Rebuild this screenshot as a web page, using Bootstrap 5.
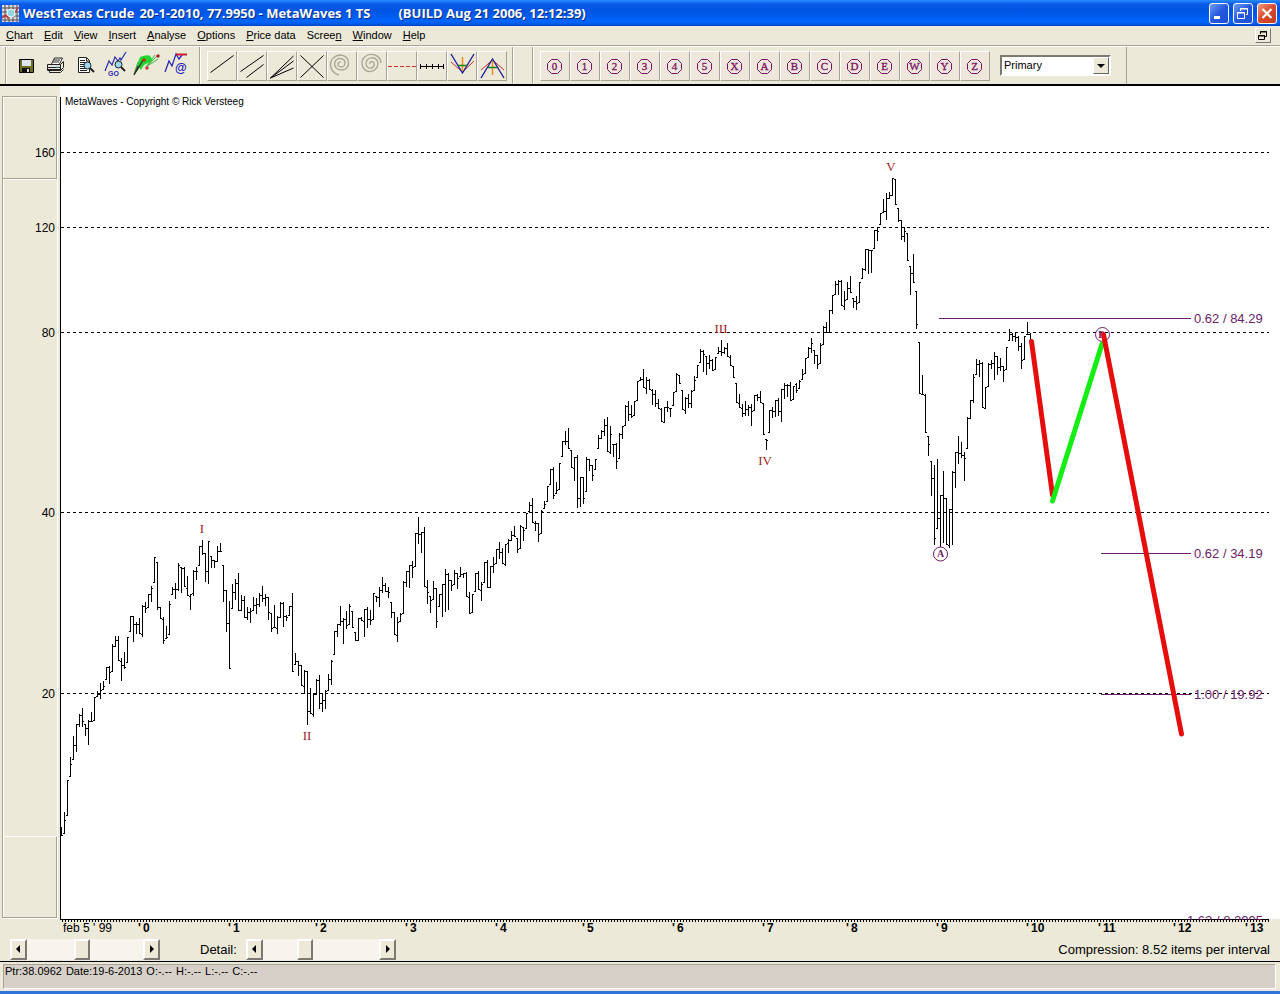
<!DOCTYPE html>
<html lang="en">
<head>
<meta charset="utf-8">
<meta name="viewport" content="width=device-width, initial-scale=1">
<title>WestTexas Crude - MetaWaves 1 TS</title>
<link href="https://cdn.jsdelivr.net/npm/bootstrap@5.3.0/dist/css/bootstrap.min.css" rel="stylesheet">
<style>
:root { --face: #ece9d8; --shade: #a7a493; --plum: #6b1d6b; }
body { background: var(--face); color: #000; font-family: "Liberation Sans", Arial, sans-serif; font-size: 11px; line-height: 15px; }
button { color: #000; }
.titlebar { height: 26px; padding: 0 3px 0 2px; background: linear-gradient(#2b8bff 0, #0a5be8 4px, #0054e3 11px, #0066ff 22px, #0045c8 26px); }
.title-text { font: 700 13px/26px "Open Sans", "Noto Sans", sans-serif; color: #fff; text-shadow: 1px 1px 0 #0a2a80; }
.instrument { margin-right: 5px; }
.build { margin-left: 28px; }
.win-btn { width: 20px; height: 21px; padding: 0; border: 1px solid #fff; border-radius: 3px; background: linear-gradient(135deg, #6f9cf5, #2558dd 50%, #1c4fd8); }
.win-btn.close-btn { background: linear-gradient(135deg, #ee9a80, #d9492a 50%, #c23c1c); }
.menubar { height: 20px; padding: 0 9px 0 6px; border-bottom: 1px solid var(--shade); }
.menu-items { gap: 11px; }
.menubar a { color: #000; text-decoration: none; line-height: 18px; padding-bottom: 1px; }
.mdi-btn { width: 16px; height: 15px; padding: 0; border: 1px solid; border-color: #fff #777 #777 #fff; background: var(--face); }
.toolbar { height: 40px; border-top: 1px solid #fff; border-bottom: 2px solid #000; }
.band { height: 37px; border-left: 1px solid var(--shade); box-shadow: inset 1px 0 0 #fff; }
.band-files { width: 193px; margin-left: 5px; padding: 0 5px; }
.band-tools { width: 313px; margin-left: 1px; padding: 0 5px 0 7px; }
.band-gap { width: 20px; }
.band-waves { width: 594px; padding: 0 7px; }
.flat { width: 30px; height: 30px; padding: 0; border: 0; background: none; }
.tool { width: 30px; height: 30px; padding: 0; border: 1px solid; border-color: #fff var(--shade) var(--shade) #fff; background: var(--face); }
.wave { background: #efe6dc; }
.degree { width: 111px; margin-left: 10px; }
.degree select { width: 100%; height: 21px; padding: 0 20px 0 2px; border: 2px solid; border-color: #7c7a70 #fff #fff #7c7a70; border-radius: 0; background: #fff; color: #000; font-size: 11px; line-height: 15px; appearance: none; }
.drop { position: absolute; right: 2px; top: 2px; width: 16px; height: 17px; border: 1px solid; border-color: #fff #666 #666 #fff; background: var(--face); pointer-events: none; }
.arrow { width: 17px; height: 21px; padding: 0; border: 2px solid; border-color: #fff #7c7a70 #7c7a70 #fff; background: var(--face); }
.slide { width: 116px; height: 21px; margin: 0; appearance: none; background: #f6f4ec; }
.slide::-webkit-slider-thumb { appearance: none; width: 16px; height: 21px; border: 2px solid; border-color: #fff #7c7a70 #7c7a70 #fff; background: var(--face); }
.controls { height: 25px; padding: 0 10px; border-bottom: 1px solid #000; font-size: 13px; }
.detail { width: 46px; margin-left: 40px; }
.status { height: 25px; margin: 2px 4px 2px 3px; padding: 0 1px; gap: 4px; line-height: 13px; border: 1px solid; border-color: var(--shade) #fff #fff var(--shade); background: #d6d0c8; }
.taskedge { height: 4px; background: #2f74dc; }
.chart text { font-family: "Liberation Sans", Arial, sans-serif; font-size: 12px; }
.chart .note { font-size: 10px; }
.chart .year { font-weight: 700; }
.chart .roman { font-family: "Liberation Serif", serif; font-size: 13px; fill: #a01c24; text-anchor: middle; }
.chart .letter { font-family: "Liberation Serif", serif; font-size: 10px; font-weight: 700; fill: var(--plum); text-anchor: middle; }
.chart .level { font-size: 13px; fill: var(--plum); }
.wave text { font: 400 11px "Liberation Serif", serif; fill: #7c1464; stroke: #7c1464; stroke-width: .3px; text-anchor: middle; }
</style>
</head>
<body class="min-vh-100 d-flex flex-column">
<header class="titlebar d-flex align-items-center">
  <svg width="17" height="17" viewBox="0 0 17 17" class="me-1" aria-hidden="true"><rect width="17" height="17" fill="#d8dcdc"/><path d="M3 0v17M7 0v17M11 0v17M15 0v17M0 3h17M0 7h17M0 11h17M0 15h17" stroke="#5b4a50"/><path d="M0 13l4-3 2 3 4-8 3 3 3-6" stroke="#c23038" fill="none" stroke-width="1.5"/><circle cx="9" cy="8" r="4" fill="#8fd8e0" stroke="#e8ffff"/></svg>
  <h1 class="title-text d-flex m-0 flex-grow-1"><span class="instrument">WestTexas Crude</span> <span>20-1-2010, 77.9950 - MetaWaves 1 TS</span> <span class="build">(BUILD Aug 21 2006, 12:12:39)</span></h1>
  <div class="d-flex gap-1">
    <button class="win-btn d-flex" aria-label="Minimize"><svg width="18" height="19"><path d="M4 13.500h6" stroke="#fff" stroke-width="3"/></svg></button>
    <button class="win-btn d-flex" aria-label="Restore"><svg width="18" height="19" fill="none" stroke="#fff"><path d="M6.500 7V4.500h7v6H12M6 5h8M3.500 8.500h7v6h-7zM3 9h8"/></svg></button>
    <button class="win-btn close-btn d-flex" aria-label="Close"><svg width="18" height="19"><path d="M4.500 5l9 9M13.500 5l-9 9" stroke="#fff" stroke-width="2.200"/></svg></button>
  </div>
</header>
<nav class="menubar d-flex align-items-center" aria-label="Main menu">
  <div class="menu-items d-flex flex-grow-1" id="menu"></div>
  <button class="mdi-btn d-flex" aria-label="Restore chart window"><svg width="14" height="13" fill="none" stroke="#000"><path d="M4.500 5V2.500h6v5H9M4 3h7M2.500 6.500h6v4h-6zM2 7h7"/></svg></button>
</nav>
<div class="toolbar d-flex" role="toolbar">
  <div class="band band-files d-flex align-items-center">
    <button class="flat" aria-label="Save"><svg width="30" height="30"><path d="M8.500 8.500h14v13h-14z" fill="#6e6e20" stroke="#000"/><path d="M11 9h9v6h-9z" fill="#dfe6f0"/><path d="M11 17h8v5h-8z" fill="#111"/><path d="M16 18h2v3h-2z" fill="#ddd"/></svg></button>
    <button class="flat" aria-label="Print"><svg width="30" height="30" fill="none" stroke="#222"><path d="M10.500 13l3-6h8l-3 6" fill="#fff"/><path d="M13 9h6M12 11h6" /><path d="M6.500 13.500h13v6h-13z" fill="#e7e7df"/><path d="M19.500 13.500l3-3v6l-3 3"/><path d="M8.500 19.500v2h11l3-3M7 16.500h12M7 18.500h12"/><path d="M15 16h3" stroke="#4bb8c8"/></svg></button>
    <button class="flat" aria-label="Print preview"><svg width="30" height="30" fill="none" stroke="#222"><path d="M7.500 6.500h8l3 3v12h-11z" fill="#fff"/><path d="M15.500 7v3h3M9 9.500h5M9 11.500h7M9 13.500h4M9 15.500h4M9 17.500h5M9 19.500h7"/><circle cx="16.500" cy="14.500" r="3.500" fill="#9cd8ee"/><path d="M19 17l4 4" stroke-width="2"/></svg></button>
    <button class="flat" aria-label="Go to wave"><svg width="30" height="30" fill="none"><path d="M4 20l4-10 3 4 3-8 3 4 2-3 1 2 5-8" stroke="#2b2bb4" stroke-width="1.200"/><circle cx="17.500" cy="13.500" r="3.500" fill="#9cd8ee" stroke="#223"/><path d="M20 16l4 4" stroke="#222" stroke-width="2"/><text x="7" y="25" font-size="7" font-weight="700" fill="#2b2bb4">GO</text></svg></button>
    <button class="flat" aria-label="Fan"><svg width="30" height="30" fill="none"><path d="M10 6q12-5 12 4l-8 4-3 5-4-5z" transform="translate(-1 0)" fill="#20d830"/><path d="M3 23l4-12M3 23L15 9M15 16l11-11M15 16l9-12M15 16l12-8" stroke="#40b840"/><path d="M3 24L12 9M3 24l4-9" stroke="#333" stroke-width="1.300"/><circle cx="13" cy="9" r="1.700" fill="#c03010"/><circle cx="16" cy="17" r="1.700" fill="#c33"/><circle cx="27" cy="5" r="1.700" fill="#a22"/></svg></button>
    <button class="flat" aria-label="Mail wave"><svg width="30" height="30" fill="none"><path d="M4 21l4-11 3 5 4-12 3 5 3-4" stroke="#2b2bb4" stroke-width="1.300"/><path d="M15 3.500h11" stroke="#d01830" stroke-width="2"/><text x="14" y="21" font-size="12" font-weight="700" fill="#2222c0">@</text></svg></button>
  </div>
  <div class="band band-tools d-flex align-items-center">
    <button class="tool" aria-label="Trend line"><svg width="28" height="28"><path d="M2.500 20.500l23-17" stroke="#000"/></svg></button>
    <button class="tool" aria-label="Channel"><svg width="28" height="28"><path d="M2.500 19.500l23-16M8.500 25.500l17-13" stroke="#000"/></svg></button>
    <button class="tool" aria-label="Speed lines"><svg width="28" height="28"><path d="M2.500 26l23-22M2.500 26l23-17M2.500 26l23-10" stroke="#000"/></svg></button>
    <button class="tool" aria-label="Cross lines"><svg width="28" height="28"><path d="M2.500 3.500l23 22M25.500 3.500l-23 22" stroke="#000"/></svg></button>
    <button class="tool" aria-label="Spiral left"><svg width="28" height="28" fill="none" stroke="#aaa798" stroke-width="1.400"><path d="M11 23C-1 20 0 4 12 3C23 3 23 18 14 18C4 18 5 6 12 6.500C19 7 18 15 13 15C8 14 10 9 13 10"/></svg></button>
    <button class="tool" aria-label="Spiral right"><svg width="28" height="28" fill="none" stroke="#aaa798" stroke-width="1.400"><path d="M23 11C22 -1 4 0 4 11C4 23 20 22 20 11C19 3 7 5 8 12C9 19 18 16 16 11C14 8 11 10 12 12"/></svg></button>
    <button class="tool" aria-label="Support line"><svg width="28" height="28"><path d="M0 14.500h28" stroke="#d03030" stroke-dasharray="4 2"/></svg></button>
    <button class="tool" aria-label="Time ruler"><svg width="28" height="28"><path d="M2 14.500h24M2.500 12v5M8.500 12v5M14.500 12v5M20.500 12v5M25.500 12v5" stroke="#000"/></svg></button>
    <button class="tool" aria-label="Bottom projection"><svg width="28" height="28" fill="none"><path d="M3 10l11.500 10L26 9" stroke="#c03030"/><path d="M3 2l11.500 19L26 2" stroke="#20209a" stroke-width="1.400"/><path d="M14.500 5v14" stroke="#f09010" stroke-width="1.500"/><path d="M10 13.500h9" stroke="#108010" stroke-width="1.500"/></svg></button>
    <button class="tool" aria-label="Top projection"><svg width="28" height="28" fill="none"><path d="M3 18L14.500 8 26 18" stroke="#c03030"/><path d="M3 26L14.500 7 26 26" stroke="#20209a" stroke-width="1.400"/><path d="M14.500 9v14" stroke="#f09010" stroke-width="1.500"/><path d="M10 15.500h9" stroke="#108010" stroke-width="1.500"/></svg></button>
  </div>
  <div class="band band-gap"></div>
  <div class="band band-waves d-flex align-items-center">
    <div class="d-flex" id="waves"></div>
    <div class="degree position-relative">
      <select class="d-block" aria-label="Wave degree"><option>Primary</option></select>
      <span class="drop d-flex" aria-hidden="true"><svg width="14" height="15"><path d="M3 6h8l-4 4z"/></svg></span>
    </div>
  </div>
  <div class="band"></div>
</div>
<main class="bg-white">
  <svg class="chart d-block w-100" viewBox="0 86 1280 851" role="img" aria-label="WestTexas Crude price chart">
    <defs><clipPath id="plot"><rect x="60" y="86" width="1220" height="834"/></clipPath></defs>
    <rect x="60" y="86" width="1220" height="833" fill="#fff"/>
    <path d="M0 86h60v833h1220v18H0z" fill="#ece9d8"/>
    <g fill="none" shape-rendering="crispEdges">
      <path d="M3.500 918V97.500H56M3 179.500h53M3 836.500h53M57.500 97v821.500H3" stroke="#fff"/>
      <path d="M2.500 918V96.500H57M56.500 97v82M3 178.500h54M56.500 837v80M3 917.500h54" stroke="#a7a493"/>
      <path d="M60.500 97v823M60 919.500h1209" stroke="#000"/>
      <path d="M62 921h1207" stroke="#000" stroke-width="2" stroke-dasharray="1 2"/>
      <path id="grid" stroke="#000" stroke-dasharray="3 3"/>
      <path id="bars" stroke="#000"/>
      <path d="M939 318.500h252M1101 553.500h90M1101 694.500h90" stroke="#6b1d6b"/>
    </g>
    <g id="labels"></g>
    <g fill="none" stroke="#6b1d6b"><circle cx="940.500" cy="554" r="7"/><circle cx="1102.500" cy="334.500" r="7"/></g>
    <text class="letter" x="940.500" y="557">A</text><text class="letter" x="1101.500" y="338">B</text>
    <g fill="none" stroke-width="5" stroke-linecap="round">
      <path d="M1031.500 341.500L1052.500 495" stroke="#e60d0d"/>
      <path d="M1052.500 501L1102 344" stroke="#14ee14"/>
      <path d="M1103.500 334.500L1181.500 734" stroke="#e60d0d"/>
    </g>
    <g clip-path="url(#plot)"><text class="level" x="1187" y="925">1.62 / 8.2995</text></g>
  </svg>
</main>
<div class="controls d-flex align-items-center">
  <div class="d-flex" id="scroll"></div>
  <label class="detail" for="detail">Detail:</label>
  <div class="d-flex" id="zoom"></div>
  <span class="ms-auto">Compression: 8.52 items per interval</span>
</div>
<footer>
  <div class="status d-flex"><span>Ptr:38.0962</span> <span>Date:19-6-2013</span> <span>O:-.--</span> <span>H:-.--</span> <span>L:-.--</span> <span>C:-.--</span></div>
  <div class="taskedge"></div>
</footer>
<script src="https://cdn.jsdelivr.net/npm/bootstrap@5.3.0/dist/js/bootstrap.bundle.min.js"></script>
<script>
// Menu entries; the underscore precedes the access key.
document.getElementById('menu').innerHTML = ['_Chart', '_Edit', '_View', '_Insert', '_Analyse', '_Options', '_Price data', 'Scree_n', '_Window', '_Help']
  .map(t => `<a href="#">${t.replace(/_(.)/, '<u>$1</u>')}</a>`).join('');

document.getElementById('waves').innerHTML = [...'012345XABCDEWYZ']
  .map(c => `<button class="tool wave" aria-label="Wave ${c}"><svg width="28" height="28"><path d="M10.500 7.500h6l4 4v6l-4 4h-6l-4-4v-6z" fill="none" stroke="#7c1464"/><text x="13.500" y="18">${c}</text></svg></button>`).join('');

// Scroll bars: arrow, track, arrow.
const bar = (id, label, value) => `<button class="arrow" aria-label="${label} left"><svg class="d-block" width="13" height="17"><path d="M8 4v8L4 8z"/></svg></button><input class="slide" type="range" id="${id}" aria-label="${label}" value="${value}"><button class="arrow" aria-label="${label} right"><svg class="d-block" width="13" height="17"><path d="M5 4v8l4-4z"/></svg></button>`;
document.getElementById('scroll').innerHTML = bar('position', 'Position', 47);
document.getElementById('zoom').innerHTML = bar('detail', 'Detail', 34);

// Price bars, one every 3 units: high, low, close.
const series = `827 836 836,812 834 820,780 816 780,757 777 764,736 760 745,724 752 724,714 727 715,708 727 721,724 736 728,720 745 721,712 722 721,697 721 697,691 697 694,683 699 690,681 690 686,667 680 667,666 684 672,644 672 646,636 647 640,636 661 661,658 681 665,652 669 667,637 663 637,616 632 616,616 642 624,622 634 624,618 634 634,605 637 606,602 613 608,594 608 594,586 602 588,557 583 557,562 610 607,607 619 619,617 644 640,626 639 637,601 635 604,587 595 589,583 599 589,563 591 565,567 593 568,567 587 588,576 596 596,594 610 593,570 596 571,567 580 571,546 566 546,540 555 553,553 582 571,541 584 541,556 568 560,560 568 561,546 562 551,543 552 551,565 602 590,590 632 623,601 669 669,584 609 592,579 600 583,573 611 611,595 611 600,596 618 617,607 620 612,608 623 611,597 611 605,598 614 604,593 607 595,586 602 598,594 606 597,597 620 612,613 632 628,605 628 628,616 634 617,602 618 603,602 627 616,615 621 617,606 616 606,593 672 672,653 665 661,661 676 665,665 686 686,670 694 671,671 725 711,688 714 714,693 717 694,679 695 680,675 709 703,693 712 700,690 709 691,674 691 679,660 685 661,631 655 631,
624 637 624,606 626 621,618 644 619,611 629 625,604 625 606,611 628 628,632 641 641,618 641 618,617 621 621,609 637 609,607 628 619,610 625 620,593 620 593,596 602 597,587 607 590,577 593 585,583 592 591,587 598 592,602 618 612,612 635 635,617 642 622,613 622 614,581 614 582,571 587 571,565 588 565,561 578 567,533 567 533,517 544 534,532 553 532,527 587 587,580 604 592,596 613 600,581 600 588,588 628 621,594 607 594,584 617 584,569 612 574,573 610 580,580 591 585,570 585 573,573 589 578,567 577 574,573 578 573,572 597 597,592 614 614,594 613 592,573 592 573,571 590 590,582 601 584,562 583 562,560 588 588,566 588 566,557 573 564,549 564 549,542 559 552,548 564 564,544 566 543,539 553 540,531 541 535,526 537 538,538 553 549,525 549 526,527 541 530,513 529 513,502 512 505,498 523 523,521 531 523,523 542 534,510 534 511,501 509 504,486 502 486,469 485 469,467 499 495,482 494 490,463 490 463,441 457 441,431 445 441,428 449 448,450 468 468,457 481 457,455 508 498,477 507 477,477 504 498,457 492 459,459 471 465,465 481 475,459 470 459,435 449 438,430 439 431,419 436 425,417 452 452,426 454 434,444 457 444,443 469 461,433 459 434,
426 439 426,405 426 406,401 421 414,405 418 416,401 416 401,381 401 381,377 381 379,369 388 388,377 394 380,379 390 390,389 405 394,390 407 403,399 409 409,408 422 422,407 423 407,401 412 407,408 417 408,392 406 392,373 392 374,375 384 384,390 410 410,397 414 398,394 408 403,390 408 391,376 391 380,365 378 365,349 363 351,350 372 354,356 375 363,355 369 360,359 371 371,357 370 357,347 354 351,340 356 352,347 354 348,343 357 357,355 366 366,366 378 378,383 403 403,394 408 408,404 417 413,401 416 409,405 416 407,404 426 411,395 411 395,394 401 397,391 403 403,403 435 435,439 450 440,410 433 410,407 418 411,400 417 400,398 416 411,389 422 389,383 399 385,384 397 385,382 401 401,386 400 384,383 393 390,380 389 381,369 380 374,358 374 358,347 358 348,338 353 343,350 364 355,355 369 364,343 364 345,326 345 327,322 333 333,310 333 310,
295 314 295,281 295 284,280 295 281,280 306 306,291 310 300,282 300 288,276 293 293,298 308 301,296 310 303,282 303 282,268 279 269,249 271 249,249 274 250,250 273 250,230 249 230,227 241 231,213 225 213,199 213 211,193 220 198,192 199 195,178 196 178,179 205 205,208 222 220,220 240 236,227 242 231,233 261 261,266 295 273,254 283 282,291 329 324,342 394 394,375 395 395,394 433 433,436 456 444,461 496 478,465 545 538,459 529 518,495 547 495,471 543 498,498 545 545,509 548 509,471 545 472,452 488 452,436 464 453,442 458 455,452 481 458,417 449 418,400 419 400,374 403 377,359 375 364,360 377 363,362 408 408,387 409 387,363 387 364,360 369 363,352 380 356,356 375 367,358 371 366,366 382 370,347 370 347,329 341 334,333 341 336,332 342 337,336 351 346,343 369 360,336 360 336,322 335 334,333 341 341`
  .split(',').map(s => s.trim().split(' ').map(Number));
let path = '', last = 836;
series.forEach(([hi, lo, close], i) => {
  const x = 61 + 3 * i, clamp = v => Math.min(lo - 1, Math.max(hi, v)) + .5;
  path += `M${x + .5} ${hi}V${lo}M${x - 1} ${clamp(last)}h1M${x + 1} ${clamp(close)}h1`;
  last = close;
});
document.getElementById('bars').setAttribute('d', path);

const text = (x, y, s, attrs = '') => `<text x="${x}" y="${y}" ${attrs}>${s}</text>`;
const grid = [[160, 152], [120, 227], [80, 332], [40, 512], [20, 693]];
document.getElementById('grid').setAttribute('d', grid.map(([, y]) => `M61 ${y}.5H1269`).join(''));
const years = [138, 228, 315, 405, 495, 582, 672, 762, 846, 936, 1026, 1098, 1173, 1245];
document.getElementById('labels').innerHTML =
  grid.map(([v, y]) => text(55, y + 5, v, 'text-anchor="end"')).join('') +
  years.map((x, n) => text(x, 932, "'", 'class="year"') + text(x + 5, 932, n, 'class="year"')).join('') +
  text(63, 932, "feb 5 ' 99") +
  text(65, 105, 'MetaWaves - Copyright © Rick Versteeg', 'class="note"') +
  [['I', 202, 533], ['II', 307, 740], ['III', 721, 333], ['IV', 765, 465], ['V', 891, 171]].map(([s, x, y]) => text(x, y, s, 'class="roman"')).join('') +
  [['0.62 / 84.29', 323], ['0.62 / 34.19', 558], ['1.00 / 19.92', 699]].map(([s, y]) => text(1194, y, s, 'class="level"')).join('');
</script>
</body>
</html>
